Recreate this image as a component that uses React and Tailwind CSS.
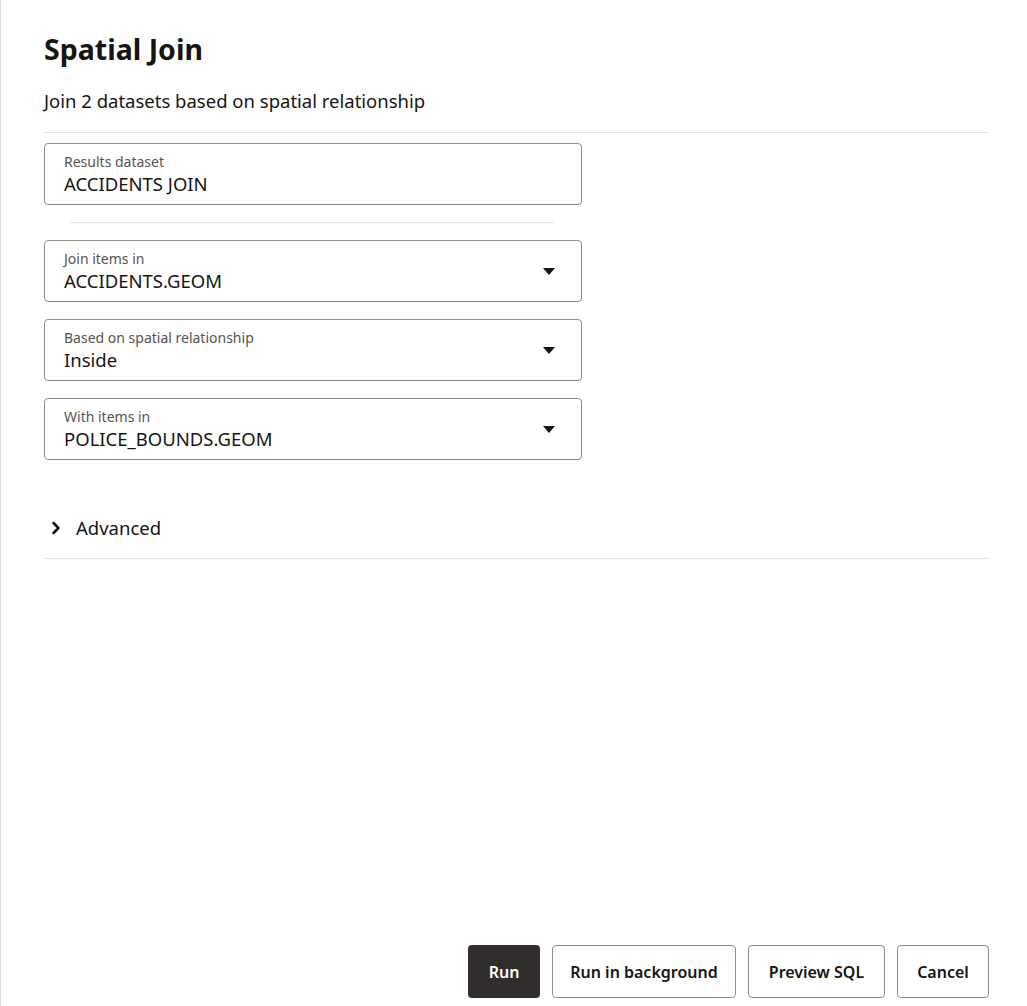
import { ChevronRight } from 'lucide-react';

const font = { fontFamily: '"Noto Sans", "Open Sans", sans-serif' };

// Small filled caret used by the select fields
function Caret() {
  return (
    <svg width="12" height="7" viewBox="0 0 12 7" className="shrink-0">
      <path d="M0 0h12L6 7z" fill="#161513" />
    </svg>
  );
}

function Field({ label, value, select }) {
  return (
    <div className="w-[538px] h-[62px] rounded-[4px] border border-[#8f8c89] flex items-center pl-[19px] pr-[26px]">
      <div className="flex-1 flex flex-col">
        <span className="text-[14px] leading-[19px] text-[#58534e]">{label}</span>
        <span className="text-[18.5px] leading-[25px] text-[#161513]">{value}</span>
      </div>
      {select && <Caret />}
    </div>
  );
}

export default function App() {
  return (
    <div style={font} className="h-[1006px] bg-white border-l border-[#dedcda] flex flex-col pl-[43px] pr-[38px] text-[#161513]">
      {/* Header */}
      <h1 className="pt-[31px] text-[28.5px] leading-[36px] font-bold">Spatial Join</h1>
      <p className="mt-[22px] text-[18.5px] leading-[24px]">Join 2 datasets based on spatial relationship</p>
      <div className="mt-[19px] h-px bg-[#e4e2e0]" />

      {/* Form */}
      <div className="mt-[10px]">
        <Field label="Results dataset" value="ACCIDENTS JOIN" />
      </div>
      <div className="mt-[17px] ml-[26px] w-[484px] h-px bg-[#e4e2e0]" />
      <div className="mt-[17px] flex flex-col gap-[17px]">
        <Field label="Join items in" value="ACCIDENTS.GEOM" select />
        <Field label="Based on spatial relationship" value="Inside" select />
        <Field label="With items in" value="POLICE_BOUNDS.GEOM" select />
      </div>

      {/* Advanced section toggle */}
      <button className="mt-[54px] flex items-center gap-[10px] pl-[2px] h-[28px] text-[18.5px]">
        <ChevronRight size={20} strokeWidth={3} />
        <span>Advanced</span>
      </button>
      <div className="mt-[16px] h-px bg-[#e4e2e0]" />

      {/* Footer actions */}
      <div className="mt-auto mb-[8px] flex justify-end gap-[12px] text-[16px] font-semibold">
        <button className="h-[53px] w-[72px] rounded-[4px] bg-[#312d2a] text-white">Run</button>
        <button className="h-[53px] w-[184px] rounded-[4px] border border-[#8f8c89] bg-white">Run in background</button>
        <button className="h-[53px] w-[137px] rounded-[4px] border border-[#8f8c89] bg-white">Preview SQL</button>
        <button className="h-[53px] w-[92px] rounded-[4px] border border-[#8f8c89] bg-white">Cancel</button>
      </div>
    </div>
  );
}
